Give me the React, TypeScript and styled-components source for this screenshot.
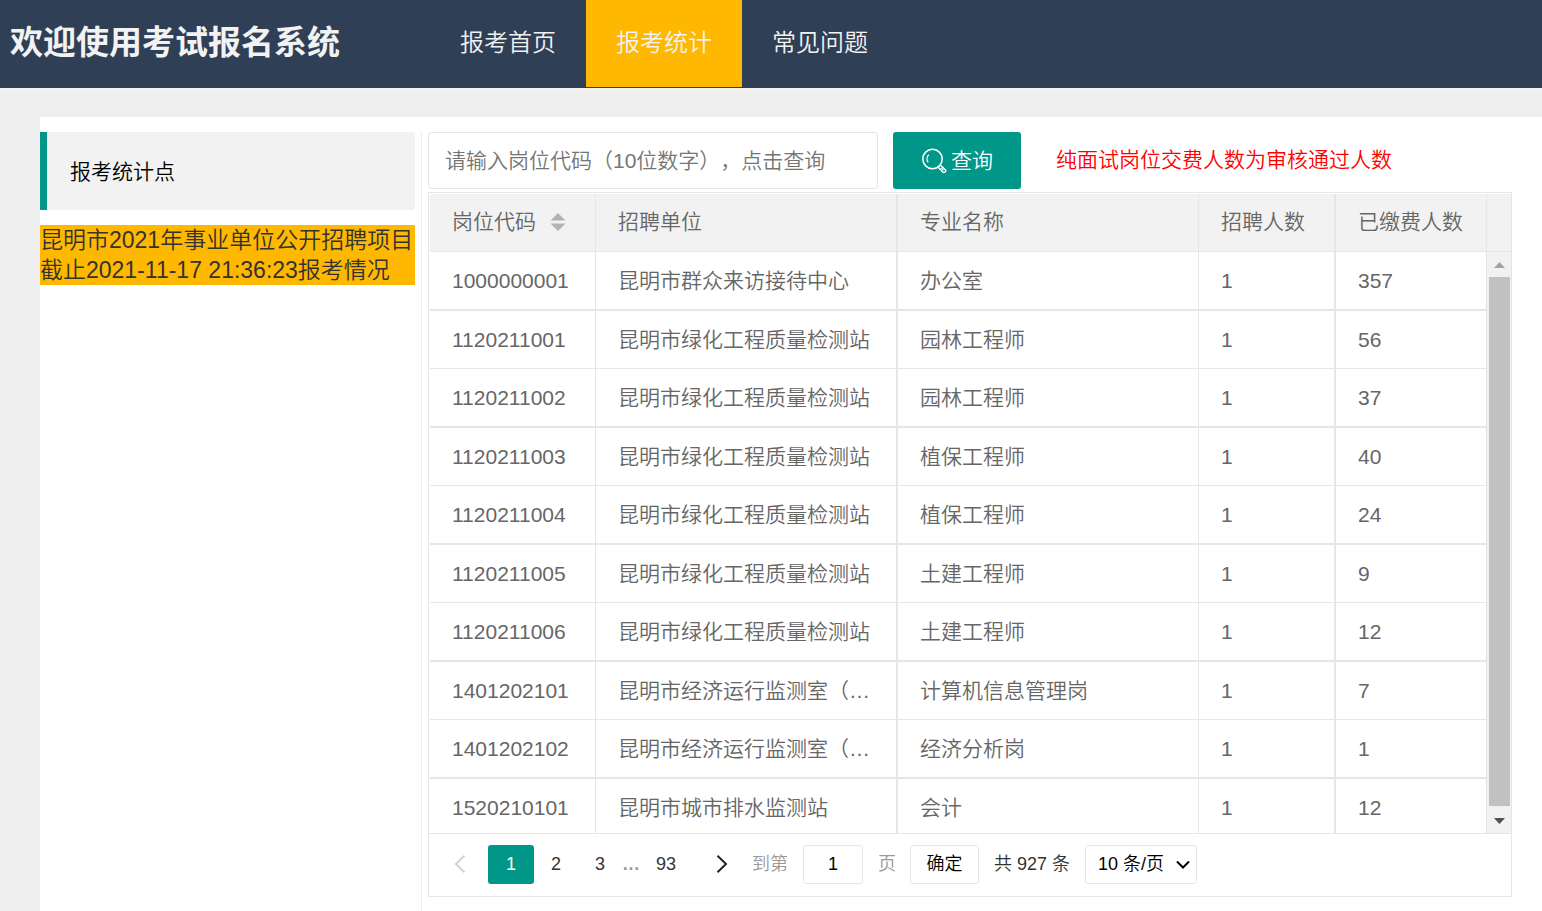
import React from "react";
import styled, { createGlobalStyle } from "styled-components";

const color = {
  navy: "#2f4056",
  teal: "#009688",
  amber: "#ffb800",
  line: "#e6e6e6",
  soft: "#f2f2f2",
  page: "#eeeeee",
  text: "#666666",
};

const GlobalStyle = createGlobalStyle`
  *, *::before, *::after { box-sizing: border-box; }
  body {
    margin: 0;
    background: ${color.page};
    color: #333;
    font-family: "Liberation Sans", "Noto Sans CJK SC", sans-serif;
    font-size: 21px;
    font-weight: 350;
    line-height: 28px;
    text-spacing-trim: space-all;
  }
  button, input, select { font: inherit; text-spacing-trim: inherit; }
`;

const Page = styled.div`
  display: flex;
  flex-direction: column;
  min-height: 100vh;
`;

const Header = styled.header`
  display: flex;
  height: 92px;
  background: ${color.navy};
  border-bottom: 4px solid ${color.soft};
`;

const Title = styled.h1`
  width: 430px;
  margin: 0;
  padding-left: 10px;
  color: ${color.soft};
  font-size: 33px;
  font-weight: 700;
  line-height: 86px;
  white-space: nowrap;
`;

const Nav = styled.nav`
  display: flex;
`;

const NavLink = styled.a<{ $active?: boolean }>`
  height: 87px;
  padding: 0 30px;
  background: ${(p) => (p.$active ? color.amber : "transparent")};
  color: ${color.soft};
  font-size: 24px;
  line-height: 86px;
  text-decoration: none;
  white-space: nowrap;
`;

const Panel = styled.main`
  display: flex;
  flex: 1;
  margin: 25px 0 0 40px;
  padding: 15px 30px 0 0;
  background: #fff;
`;

const Sidebar = styled.aside`
  flex: none;
  width: 382px;
  padding-right: 6px;
  border-right: 1px solid ${color.page};
`;

const SideHeading = styled.h2`
  height: 78px;
  margin: 0 0 15px;
  padding: 0 23px;
  border-left: 7px solid ${color.teal};
  border-radius: 0 3px 3px 0;
  background: ${color.soft};
  color: #000;
  font-size: 21px;
  font-weight: inherit;
  line-height: 80px;
`;

const Project = styled.a`
  display: block;
  background: ${color.amber};
  color: #333;
  font-size: 23px;
  line-height: 30px;
  text-decoration: none;
  white-space: nowrap;
`;

const Content = styled.section`
  flex: 1;
  min-width: 0;
  padding-left: 6px;
`;

const SearchRow = styled.form`
  display: flex;
  height: 57px;
  margin-bottom: 3px;
`;

const SearchInput = styled.input`
  width: 450px;
  margin-right: 15px;
  padding: 0 16px;
  border: 1px solid ${color.line};
  border-radius: 3px;
  background: #fff;
  &::placeholder { color: #757575; }
`;

const SearchButton = styled.button`
  display: flex;
  align-items: center;
  justify-content: center;
  gap: 4px;
  width: 128px;
  padding: 0;
  border: 0;
  border-radius: 3px;
  background: ${color.teal};
  color: #fff;
`;

const Notice = styled.p`
  margin: 0 0 0 35px;
  color: #f00;
  line-height: 56px;
  white-space: nowrap;
`;

const Grid = styled.div`
  border: 1px solid ${color.line};
`;

const GridView = styled.div`
  display: flex;
  height: 641px;
  padding: 1px 0 0 1px;
  border-bottom: 1px solid ${color.line};
`;

const Scroller = styled.div`
  flex: 1;
  min-width: 0;
  overflow: auto;
  scrollbar-width: none;
`;

const Table = styled.table`
  width: 100%;
  border-spacing: 0;
  table-layout: fixed;
  color: ${color.text};
`;

const HeadCell = styled.th<{ $wide?: boolean }>`
  position: sticky;
  top: 0;
  height: 58px;
  padding: 0 0 2px 22px;
  border-right: ${(p) => (p.$wide ? 2 : 1)}px solid ${color.line};
  border-bottom: 1px solid ${color.line};
  background: ${color.soft};
  font-weight: inherit;
  text-align: left;
  white-space: nowrap;
`;

const Row = styled.tr`
  height: 58px;
  &:nth-child(odd) { height: 59px; }
  &:nth-child(odd) td { border-bottom-width: 2px; }
`;

const Cell = styled.td<{ $wide?: boolean }>`
  overflow: hidden;
  padding: 0 0 0 22px;
  border: 0 solid ${color.line};
  border-right-width: ${(p) => (p.$wide ? 2 : 1)}px;
  border-bottom-width: 1px;
  white-space: nowrap;
`;

const SortButton = styled.button`
  margin-left: 14px;
  padding: 0;
  border: 0;
  background: none;
  line-height: 0;
  vertical-align: -2px;
`;

const ScrollSide = styled.div`
  display: flex;
  flex: none;
  flex-direction: column;
  width: 24px;
`;

const ScrollHead = styled.div`
  height: 58px;
  border-bottom: 1px solid ${color.line};
  background: ${color.soft};
`;

const ScrollBar = styled.div`
  display: flex;
  flex: 1;
  flex-direction: column;
  align-items: center;
  padding: 0 1px 0 2px;
  background: #f1f1f1;
`;

const ScrollArrow = styled.svg`
  flex: none;
  width: 21px;
  height: 25px;
`;

const ScrollThumb = styled.div`
  flex: 1;
  width: 100%;
  margin-bottom: 2px;
  background: #c1c1c1;
`;

const Pager = styled.nav`
  display: flex;
  align-items: center;
  height: 62px;
  padding: 0 0 2px 9px;
  font-size: 18px;
  white-space: nowrap;
`;

const PageButton = styled.button<{ $active?: boolean; $size?: number }>`
  display: flex;
  align-items: center;
  justify-content: center;
  width: ${(p) => p.$size ?? 44}px;
  height: 39px;
  margin-left: ${(p) => (p.$active ? 6 : 0)}px;
  padding: 0;
  border: 0;
  border-radius: 3px;
  background: ${(p) => (p.$active ? color.teal : "transparent")};
  color: ${(p) => (p.$active ? "#fff" : "#333")};
`;

const Dots = styled.span`
  width: 18px;
  color: #999;
  font-weight: 700;
  text-align: center;
`;

const JumpLabel = styled.label`
  display: flex;
  align-items: center;
  gap: 15px;
  margin-right: 14px;
  color: #999;
`;

const JumpInput = styled.input`
  width: 60px;
  height: 39px;
  padding: 0;
  border: 1px solid ${color.line};
  border-radius: 3px;
  color: #000;
  text-align: center;
`;

const JumpButton = styled.button`
  width: 69px;
  height: 39px;
  padding: 0;
  border: 1px solid ${color.line};
  border-radius: 3px;
  background: #fff;
  color: #000;
`;

const Total = styled.span`
  margin: 0 15px;
`;

const SelectBox = styled.div`
  position: relative;
  width: 112px;
  height: 39px;
`;

const Select = styled.select`
  width: 100%;
  height: 100%;
  padding: 0 12px;
  appearance: none;
  border: 1px solid ${color.line};
  border-radius: 3px;
  background: #fff;
  color: #000;
`;

const SelectArrow = styled.svg`
  position: absolute;
  top: 15px;
  right: 7px;
  pointer-events: none;
`;

const rows = [
  ["1000000001", "昆明市群众来访接待中心", "办公室", "1", "357"],
  ["1120211001", "昆明市绿化工程质量检测站", "园林工程师", "1", "56"],
  ["1120211002", "昆明市绿化工程质量检测站", "园林工程师", "1", "37"],
  ["1120211003", "昆明市绿化工程质量检测站", "植保工程师", "1", "40"],
  ["1120211004", "昆明市绿化工程质量检测站", "植保工程师", "1", "24"],
  ["1120211005", "昆明市绿化工程质量检测站", "土建工程师", "1", "9"],
  ["1120211006", "昆明市绿化工程质量检测站", "土建工程师", "1", "12"],
  ["1401202101", "昆明市经济运行监测室（…", "计算机信息管理岗", "1", "7"],
  ["1401202102", "昆明市经济运行监测室（…", "经济分析岗", "1", "1"],
  ["1520210101", "昆明市城市排水监测站", "会计", "1", "12"],
];

const columns = [
  { name: "岗位代码", width: 166, sortable: true },
  { name: "招聘单位", width: 302, wide: true },
  { name: "专业名称" },
  { name: "招聘人数", width: 137, wide: true },
  { name: "已缴费人数", width: 151 },
];

const SearchIcon = () => (
  <svg width="26" height="26" viewBox="0 0 26 26" fill="none" stroke="#fff" aria-hidden="true">
    <circle cx="11.5" cy="11" r="9.7" strokeWidth="1.6" />
    <path d="M7.2 14.3C5.4 11.8 5.8 8.6 7.8 6.8" strokeWidth="1.3" />
    <path d="M17.2 19.2L21.8 24C23.3 25.3 25.6 23.3 24.3 21.8L19.5 17.2" strokeWidth="1.5" />
    <path d="M20 19.8L22.5 22.3" strokeWidth="1.2" />
  </svg>
);

export default function App() {
  return (
    <>
      <GlobalStyle />
      <Page>
        <Header>
          <Title>欢迎使用考试报名系统</Title>
          <Nav>
            <NavLink href="#home">报考首页</NavLink>
            <NavLink href="#stats" $active>报考统计</NavLink>
            <NavLink href="#faq">常见问题</NavLink>
          </Nav>
        </Header>
        <Panel>
          <Sidebar>
            <SideHeading>报考统计点</SideHeading>
            <Project href="#project">
              昆明市2021年事业单位公开招聘项目<br />
              截止2021-11-17 21:36:23报考情况
            </Project>
          </Sidebar>
          <Content>
            <SearchRow onSubmit={(e) => e.preventDefault()}>
              <SearchInput aria-label="岗位代码" placeholder="请输入岗位代码（10位数字），点击查询" />
              <SearchButton type="submit"><SearchIcon />查询</SearchButton>
              <Notice>纯面试岗位交费人数为审核通过人数</Notice>
            </SearchRow>
            <Grid>
              <GridView>
                <Scroller>
                  <Table>
                    <colgroup>
                      {columns.map((c) => <col key={c.name} width={c.width} />)}
                    </colgroup>
                    <thead>
                      <tr>
                        {columns.map((c) => (
                          <HeadCell key={c.name} $wide={c.wide} scope="col">
                            {c.name}
                            {c.sortable && (
                              <SortButton type="button" aria-label="排序">
                                <svg width="16" height="18" viewBox="0 0 16 18" fill="#b2b2b2">
                                  <path d="M0.5 7.5L8 0L15.5 7.5ZM0.5 10.5L8 18L15.5 10.5Z" />
                                </svg>
                              </SortButton>
                            )}
                          </HeadCell>
                        ))}
                      </tr>
                    </thead>
                    <tbody>
                      {rows.map((row) => (
                        <Row key={row[0]}>
                          {row.map((value, i) => (
                            <Cell key={i} $wide={columns[i].wide}>{value}</Cell>
                          ))}
                        </Row>
                      ))}
                    </tbody>
                  </Table>
                </Scroller>
                <ScrollSide aria-hidden="true">
                  <ScrollHead />
                  <ScrollBar>
                    <ScrollArrow viewBox="0 0 21 25"><path d="M5 16L10.5 10L16 16Z" fill="#a3a3a3" /></ScrollArrow>
                    <ScrollThumb />
                    <ScrollArrow viewBox="0 0 21 25"><path d="M5 10L10.5 16L16 10Z" fill="#505050" /></ScrollArrow>
                  </ScrollBar>
                </ScrollSide>
              </GridView>
              <Pager aria-label="分页">
                <PageButton type="button" aria-label="上一页" disabled>
                  <svg width="12" height="18" viewBox="0 0 12 18" fill="none" stroke="#d2d2d2" strokeWidth="2">
                    <path d="M10.5 0.8L2 9L10.5 17.2" />
                  </svg>
                </PageButton>
                <PageButton type="button" $active $size={46} aria-current="page">1</PageButton>
                <PageButton type="button">2</PageButton>
                <PageButton type="button">3</PageButton>
                <Dots>…</Dots>
                <PageButton type="button" $size={52}>93</PageButton>
                <PageButton type="button" aria-label="下一页" $size={60}>
                  <svg width="12" height="18" viewBox="0 0 12 18" fill="none" stroke="#222" strokeWidth="2">
                    <path d="M1.5 0.8L10 9L1.5 17.2" />
                  </svg>
                </PageButton>
                <JumpLabel>到第<JumpInput defaultValue="1" />页</JumpLabel>
                <JumpButton type="button">确定</JumpButton>
                <Total>共 927 条</Total>
                <SelectBox>
                  <Select aria-label="每页条数" defaultValue="10">
                    <option value="10">10 条/页</option>
                    <option value="20">20 条/页</option>
                  </Select>
                  <SelectArrow width="14" height="10" viewBox="0 0 14 10" fill="none" stroke="#000" strokeWidth="2">
                    <path d="M1 1.5L7 7.5L13 1.5" />
                  </SelectArrow>
                </SelectBox>
              </Pager>
            </Grid>
          </Content>
        </Panel>
      </Page>
    </>
  );
}
